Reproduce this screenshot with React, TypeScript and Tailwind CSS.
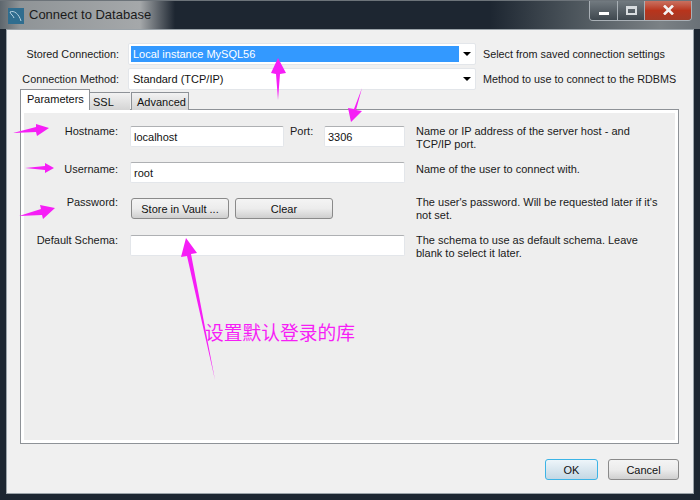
import React from "react";

const F = "font-['Liberation_Sans','Noto_Sans_CJK_SC',sans-serif]";

function Caret() {
  return <span className="ml-auto mr-[4px] w-0 h-0 border-x-[4px] border-x-transparent border-t-[4px] border-t-black" />;
}

function Label({ children, className = "" }: { children: React.ReactNode; className?: string }) {
  return <div className={`text-right text-[11px] leading-[13px] text-[#1a1a1a] pr-[1px] ${className}`}>{children}</div>;
}

function Input({ value, className = "" }: { value?: string; className?: string }) {
  return (
    <div className={`h-[21px] bg-white border border-[#e3e6ea] border-t-[#aeb0b3] rounded-[2px] px-[2px] pl-[3px] text-[11px] leading-[20px] text-[#111] ${className}`}>
      {value}
    </div>
  );
}

function Btn({ children, className = "" }: { children: React.ReactNode; className?: string }) {
  return (
    <div className={`h-[21px] pt-[1px] flex items-center justify-center border border-[#8a8a8a] rounded-[3px] bg-gradient-to-b from-[#f4f4f4] via-[#ececec] to-[#cfcfcf] text-[11px] text-[#111] ${className}`}>
      {children}
    </div>
  );
}

function Hint({ children, className = "" }: { children: React.ReactNode; className?: string }) {
  return <div className={`text-[11px] leading-[13px] text-[#1a1a1a] w-[250px] ${className}`}>{children}</div>;
}

export default function App() {
  return (
    <div className={`${F} relative w-[700px] h-[500px] overflow-hidden bg-[#1d2631] flex flex-col`}>
      <div className="h-[29px] shrink-0 flex items-center bg-[linear-gradient(90deg,#5d666d_0px,#8f9497_20px,#a5a8aa_140px,#1d2631_175px,#1d2631_490px,#4a535a_570px,#7b8185_660px,#6a7177_700px)] border-t border-[#6c7379]">
        <div className="ml-[8px] mt-[1px] w-[16px] h-[16px] bg-[#2f6d8f] flex items-center justify-center">
          <svg width="14" height="14" viewBox="0 0 14 14" fill="none" stroke="#b8d3e2" strokeWidth="1">
            <path d="M1 3C5 1 10 5 12 12M1 3c1 3 3 3 4 6" />
          </svg>
        </div>
        <div className="ml-[5px] text-[13px] text-[#1a1a1a] leading-[14px] whitespace-nowrap">Connect to Database</div>
        <div className="ml-auto mr-[8px] -mt-[9px] flex h-[20px] border border-[#a9b0b6] border-t-0 rounded-b-[4px] overflow-hidden">
          <div className="w-[28px] bg-gradient-to-b from-[#727a80] to-[#3f484f] flex items-end justify-center pb-[5px] border-r border-[#a9b0b6]">
            <div className="w-[10px] h-[3px] bg-white" />
          </div>
          <div className="w-[27px] bg-gradient-to-b from-[#727a80] to-[#3f484f] flex items-center justify-center border-r border-[#a9b0b6]">
            <div className="w-[11px] h-[9px] border-2 border-[#d8dcdf] border-t-[3px]" />
          </div>
          <div className="w-[46px] bg-gradient-to-b from-[#c9705f] via-[#b8341c] to-[#a33a26] flex items-center justify-center">
            <svg width="11" height="10" viewBox="0 0 11 10" stroke="#f3f3f3" strokeWidth="2.6"><path d="M1 0.5L10 9.5M10 0.5L1 9.5" /></svg>
          </div>
        </div>
      </div>

      <div className="flex-1 mx-[6px] mb-[6px] border border-[#9ba3a9] bg-[#f0f0f0] flex flex-col pl-[13px] pr-[14px] pt-[13px]">
        <div className="flex items-center h-[22px]">
          <div className="w-[99px] shrink-0 text-right text-[10.8px] text-[#1a1a1a] whitespace-nowrap">Stored Connection:</div>
          <div className="ml-[9px] w-[348px] shrink-0 h-[22px] bg-white border border-[#e3e6ea] rounded-[2px] flex items-center pl-[2px] text-[11px]">
            <div className="w-[328px] h-[16px] bg-[#3399ff] text-white leading-[16px] pl-[2px]">Local instance MySQL56</div>
            <Caret />
          </div>
          <div className="ml-[7px] text-[10.8px] text-[#1a1a1a] whitespace-nowrap">Select from saved connection settings</div>
        </div>
        <div className="flex items-center h-[22px] mt-[3px]">
          <div className="w-[99px] shrink-0 text-right text-[10.8px] text-[#1a1a1a] whitespace-nowrap">Connection Method:</div>
          <div className="ml-[9px] w-[348px] shrink-0 h-[22px] bg-white border border-[#e3e6ea] rounded-[2px] flex items-center pl-[4px] text-[11px] text-[#111]">
            Standard (TCP/IP)
            <Caret />
          </div>
          <div className="ml-[7px] text-[10.8px] text-[#1a1a1a] whitespace-nowrap">Method to use to connect to the RDBMS</div>
        </div>

        <div className="flex items-end h-[20px] relative z-10 -mb-[1px]">
          <div className="w-[70px] h-[21px] bg-white border border-[#8e9297] border-b-0 text-[11px] leading-[18px] pl-[6px] text-[#111]">Parameters</div>
          <div className="w-[40px] h-[18px] bg-gradient-to-b from-[#f2f2f2] to-[#d4d4d4] border-t border-[#8e9297] text-[11px] leading-[18px] pl-[3px] text-[#111]">SSL</div>
          <div className="ml-[1px] w-[58px] h-[18px] bg-gradient-to-b from-[#f2f2f2] to-[#d4d4d4] border border-[#8e9297] border-b-0 text-[11px] leading-[18px] pl-[5px] text-[#111]">Advanced</div>
        </div>

        <div className="w-[659px] h-[335px] border border-[#8e9297] bg-[#eeeeee] shadow-[inset_0_0_0_3px_#ffffff] pt-[16px] pl-[3px]">
          <div className="grid grid-cols-[95px_275px_250px] grid-rows-[36px_36px_37px_auto] gap-x-[11px] items-start">
            <Label className="-mt-[1px]">Hostname:</Label>
            <div className="flex items-start">
              <Input value="localhost" className="w-[154px]" />
              <span className="ml-[6px] text-[11px] leading-[13px] -mt-[1px] text-[#1a1a1a]">Port:</span>
              <Input value="3306" className="ml-auto w-[81px]" />
            </div>
            <Hint className="-mt-[1px]">Name or IP address of the server host - and TCP/IP port.</Hint>

            <Label className="mt-[1px]">Username:</Label>
            <Input value="root" />
            <Hint className="mt-[1px]">Name of the user to connect with.</Hint>

            <Label className="-mt-[2px]">Password:</Label>
            <div className="flex gap-[6px] pl-[1px]">
              <Btn className="w-[98px]">Store in Vault ...</Btn>
              <Btn className="w-[98px]">Clear</Btn>
            </div>
            <Hint className="-mt-[2px]">The user's password. Will be requested later if it's not set.</Hint>

            <Label className="-mt-[1px]">Default Schema:</Label>
            <Input />
            <Hint className="-mt-[1px]">The schema to use as default schema. Leave blank to select it later.</Hint>
          </div>
        </div>

        <div className="flex justify-end mt-[15px] gap-[10px]">
          <div className="w-[53px] h-[21px] pt-[1px] flex items-center justify-center rounded-[3px] border border-[#3cb4e6] bg-gradient-to-b from-[#eef5fa] to-[#c4d8e4] text-[11px] text-[#111]">OK</div>
          <Btn className="w-[71px]">Cancel</Btn>
        </div>
      </div>

      <svg className="absolute inset-0 pointer-events-none" width="700" height="500" fill="#f61ef6">
        <polygon points="278,58 286,73 280,74 278,100 276,74 271,73" />
        <polygon points="362,88 356,110 362,111 351,122 348,108 354,109" />
        <polygon points="49,128 37,136 36,132 13,133 36,127 36,124" />
        <polygon points="54,168 45,173 45,170 25,168 45,166 45,163" />
        <polygon points="55,208 43,219 42,215 19,216 41,209 40,205" />
        <polygon points="186,238 197,253 191,254 215,380 187,256 181,257" />
      </svg>
      <div className="absolute left-[205px] top-[321px] text-[18.75px] leading-[22px] text-[#f61ef6] whitespace-nowrap font-['Noto_Sans_CJK_SC',sans-serif]">设置默认登录的库</div>
    </div>
  );
}
